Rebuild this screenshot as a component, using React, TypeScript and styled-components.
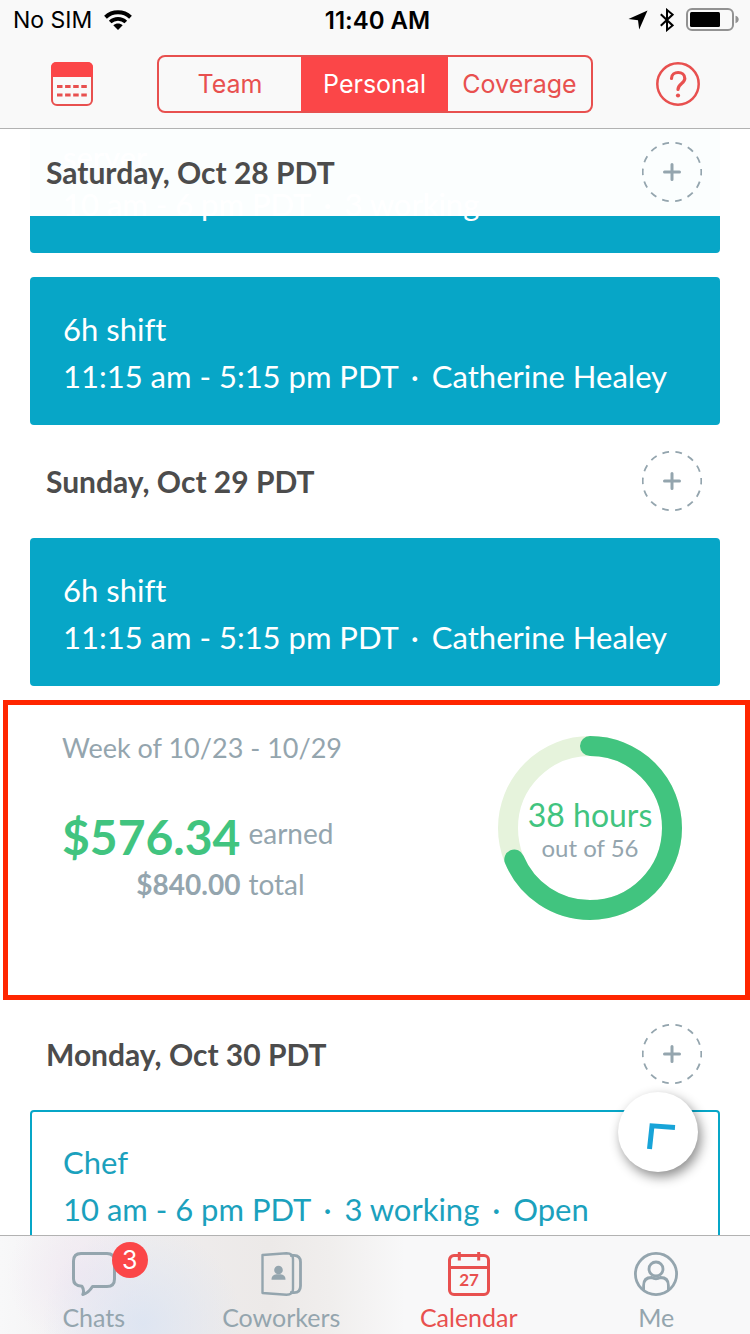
import React from "react";
import styled, { createGlobalStyle, css } from "styled-components";

const red = "#fb4648";
const redLine = "#e8504f";
const teal = "#07a6c7";
const grey = "#94a5ae";
const green = "#41c47f";

const GlobalStyle = createGlobalStyle`
  *, *::before, *::after { box-sizing: border-box; }
  body { margin: 0; background: #fff; }
  button { font: inherit; border: 0; padding: 0; margin: 0; background: none; cursor: pointer; }
  h2, p { margin: 0; }
  svg { display: block; }
`;

const Screen = styled.div`
  display: flex;
  flex-direction: column;
  height: 100vh;
  background: #fff;
  font-family: Lato, "Liberation Sans", sans-serif;
  font-variant-ligatures: none;
`;

const TopBar = styled.header`
  flex: none;
  background: #f9f9f9;
  border-bottom: 1px solid #b2b2b2;
  font-family: Inter, Roboto, sans-serif;
`;

const StatusBar = styled.div`
  display: grid;
  grid-template-columns: 1fr auto 1fr;
  align-items: center;
  height: 40px;
  padding: 0 8px 0 13px;
  font-size: 23px;
  color: #000;
`;

const StatusGroup = styled.div<{ $end?: boolean }>`
  display: flex;
  align-items: center;
  gap: 12px;
  justify-content: ${(p) => (p.$end ? "flex-end" : "flex-start")};
`;

const Clock = styled.span`
  font-size: 24px;
  font-weight: 600;
`;

const NavBar = styled.nav`
  display: flex;
  align-items: center;
  justify-content: space-between;
  height: 88px;
  padding: 0 50px;
`;

const Segments = styled.div`
  display: grid;
  grid-template-columns: 142fr 147fr 143fr;
  width: 436px;
  height: 58px;
  border: 2px solid ${redLine};
  border-radius: 8px;
  overflow: hidden;
`;

const Segment = styled.button<{ $active?: boolean }>`
  font-size: 25px;
  color: ${(p) => (p.$active ? "#fff" : redLine)};
  background: ${(p) => (p.$active ? red : "transparent")};
`;

const Main = styled.main`
  position: relative;
  flex: 1;
  min-height: 0;
  overflow: hidden;
`;

const Schedule = styled.div`
  display: flex;
  flex-direction: column;
  margin-top: -24px;
`;

const dayRow = css`
  display: flex;
  align-items: center;
  justify-content: space-between;
  height: 87px;
  padding: 0 18px 2px 16px;
`;

const DayRow = styled.div`
  ${dayRow}
  margin: 13px 30px;
`;

const StickyDay = styled.div`
  ${dayRow}
  position: absolute;
  top: 0;
  left: 30px;
  right: 30px;
  background: rgba(255, 255, 255, 0.985);
`;

const DayTitle = styled.h2`
  font-size: 30px;
  line-height: 36px;
  font-weight: 700;
  color: #4c4c4c;
`;

const AddButton = styled.button`
  width: 60px;
  height: 60px;
`;

const ShiftCard = styled.article<{ $open?: boolean }>`
  flex: none;
  height: 148px;
  margin: 0 30px;
  padding: 27px 31px 0;
  border: 2px solid ${teal};
  border-radius: 4px;
  font-size: 31px;
  line-height: 47px;
  white-space: nowrap;
  color: ${(p) => (p.$open ? "#1ba1bd" : "#fff")};
  background: ${(p) => (p.$open ? "#fff" : teal)};

  & + & {
    margin-top: 24px;
  }
`;

const Dot = styled.span`
  margin: 0 5px;
`;

const Summary = styled.section`
  display: flex;
  justify-content: space-between;
  align-items: flex-start;
  min-height: 300px;
  margin: 14px 0 0 3px;
  padding: 25px 63px 0 54px;
  border: 5px solid #ff2600;
  color: ${grey};
  font-size: 28px;
  line-height: 36px;

  & + ${DayRow} {
    margin: 11px 30px 12px;
  }
`;

const WeekRange = styled.p`
  font-size: 27px;
`;

const Amounts = styled.div`
  display: grid;
  grid-template-columns: auto auto;
  justify-content: start;
  column-gap: 8px;
  margin-top: 42px;
`;

const Earned = styled.strong`
  font-size: 48px;
  line-height: 58px;
  color: ${green};
`;

const EarnedLabel = styled.span`
  align-self: center;
  padding-bottom: 8px;
`;

const Total = styled.strong`
  text-align: right;
`;

const RingBox = styled.div`
  display: grid;
  width: 184px;
  height: 184px;
  margin-top: 6px;
  place-items: center;

  & > * {
    grid-area: 1 / 1;
  }
`;

const RingText = styled.div`
  padding-top: 6px;
  text-align: center;
  font-size: 24px;
  line-height: 32px;
`;

const Hours = styled.p`
  font-size: 32px;
  line-height: 34px;
  color: ${green};
`;

const FloatingButton = styled.button`
  position: absolute;
  right: 52px;
  bottom: 63px;
  width: 80px;
  height: 80px;
  border-radius: 50%;
  background: #fff;
  box-shadow: 3px 5px 12px rgba(0, 0, 0, 0.45);
`;

const TabBar = styled.nav`
  flex: none;
  display: grid;
  grid-template-columns: repeat(4, 1fr);
  height: 99px;
  border-top: 1px solid #b2b2b2;
  background:
    radial-gradient(circle at 19% 90%, rgba(220, 228, 242, 0.9), rgba(220, 228, 242, 0) 100px),
    radial-gradient(circle at 11% 40%, rgba(240, 231, 242, 0.8), rgba(240, 231, 242, 0) 75px),
    linear-gradient(90deg, #f8f8f9 0, #f0eeef 16%, #ece9e8 36%, #f0eeed 44%, #f8f8f9 54%);
`;

const Tab = styled.a<{ $active?: boolean }>`
  display: flex;
  flex-direction: column;
  align-items: center;
  padding-top: 16px;
  font-size: 25px;
  line-height: 30px;
  gap: 6px;
  text-decoration: none;
  color: ${(p) => (p.$active ? redLine : grey)};
`;

const TabIcon = styled.span`
  position: relative;
  width: 44px;
  height: 44px;
`;

const Badge = styled.span`
  position: absolute;
  top: -10px;
  left: 40px;
  width: 36px;
  height: 36px;
  border-radius: 50%;
  background: ${red};
  color: #fff;
  font-family: Inter, Roboto, sans-serif;
  font-size: 25px;
  line-height: 36px;
  text-align: center;
`;

function WifiIcon() {
  return (
    <svg width="28" height="21" viewBox="0 0 28 21" aria-label="Wi-Fi">
      <path d="M1.500 7.200C8.500.6 19.500.6 26.500 7.200" fill="none" stroke="#000" strokeWidth="4" />
      <path d="M6.200 12C10.600 7.800 17.400 7.800 21.800 12" fill="none" stroke="#000" strokeWidth="3.800" />
      <path d="M9.300 15.200C12 12.800 16 12.800 18.700 15.200L14 20Z" />
    </svg>
  );
}

function LocationIcon() {
  return (
    <svg width="20" height="20" viewBox="0 0 20 20" aria-label="Location">
      <path d="M19.500.5L11.200 19.500L10 10.200L.5 9Z" />
    </svg>
  );
}

function BluetoothIcon() {
  return (
    <svg width="14" height="24" viewBox="0 0 14 24" fill="none" stroke="#000" strokeWidth="2" aria-label="Bluetooth">
      <path d="M.8 6.200L12.600 17.400L7 22V2L12.600 6.600L.8 17.800" />
    </svg>
  );
}

function BatteryIcon() {
  return (
    <svg width="56" height="24" viewBox="0 0 56 24" aria-label="Battery">
      <rect x="1" y="1" width="46" height="21" rx="5" fill="none" stroke="#929292" strokeWidth="2" />
      <rect x="4" y="4" width="30" height="15" rx="1.500" />
      <path d="M49.500 7.800C53.800 9 53.800 14 49.500 15.200Z" fill="#929292" />
    </svg>
  );
}

function MonthIcon() {
  return (
    <svg width="44" height="46" viewBox="0 0 44 46" fill="none">
      <rect x="2" y="2" width="40" height="42" rx="5" stroke={redLine} strokeWidth="2" />
      <path d="M1 16V6.500Q1 1 6.500 1H37.500Q43 1 43 6.500V16Z" fill={red} />
      <path d="M7 25.500H37M7 34H37" stroke={redLine} strokeWidth="2.800" strokeDasharray="5.500 2.600" />
    </svg>
  );
}

function HelpIcon() {
  return (
    <svg width="44" height="44" viewBox="0 0 44 44" fill="none" stroke={redLine}>
      <circle cx="22" cy="22" r="20.700" strokeWidth="2.500" />
      <path d="M15.500 16.500C15.500 8.500 28.800 8.500 28.800 16.500C28.800 21.500 22 21.500 22 27.500" strokeWidth="3.200" strokeLinecap="round" />
      <circle cx="22" cy="33.500" r="2.100" fill={redLine} stroke="none" />
    </svg>
  );
}

function PlusCircle() {
  return (
    <svg width="60" height="60" viewBox="0 0 60 60" fill="none" stroke={grey}>
      <circle cx="30" cy="30" r="29.300" strokeWidth="1.800" strokeDasharray="6.700 6.450" strokeDashoffset="3.350" />
      <path d="M30 22.500V37.500M22.500 30H37.500" strokeWidth="3" strokeLinecap="round" />
    </svg>
  );
}

function ChatIcon() {
  return (
    <svg width="44" height="44" viewBox="0 0 44 44" fill="none" stroke={grey} strokeWidth="3" strokeLinejoin="round">
      <path d="M9 1.500H35Q42.500 1.500 42.500 9V27Q42.500 34.500 35 34.500H20.500C18 38.500 15 41.500 10.800 42.500C12.200 39 11.500 36.500 10 34.300Q1.500 34 1.500 27V9Q1.500 1.500 9 1.500Z" />
    </svg>
  );
}

function CoworkersIcon() {
  return (
    <svg width="44" height="44" viewBox="0 0 44 44" fill="none" stroke={grey} strokeWidth="2.400" strokeLinejoin="round">
      <path d="M3.500 3L27.500 1.300Q34 1.300 34 7V37Q34 42.800 27.500 42.800L3.500 41Z" />
      <path d="M31 3.300H35Q41.500 3.500 41.500 10V34Q41.500 40.500 35 40.700H31" strokeWidth="2.800" />
      <circle cx="19.500" cy="18" r="4.300" fill={grey} stroke="none" />
      <path d="M12.500 27.800C12.500 24 14.500 22.800 17.500 22.300H21.500C24.500 22.800 26.500 24 26.500 27.800Z" fill={grey} stroke="none" />
    </svg>
  );
}

const DateText = styled.text`
  font: 700 17px Lato, sans-serif;
  fill: ${redLine};
  stroke: none;
`;

function CalendarIcon() {
  return (
    <svg width="44" height="44" viewBox="0 0 44 44" fill="none" stroke={redLine} strokeWidth="3">
      <rect x="2.500" y="3.500" width="39" height="39" rx="4.500" />
      <path d="M2 15.500H42M12.300 0V8.500M31.700 0V8.500" />
      <DateText x="22" y="34" textAnchor="middle">27</DateText>
    </svg>
  );
}

function PersonIcon() {
  return (
    <svg width="44" height="44" viewBox="0 0 44 44" fill="none" stroke={grey} strokeWidth="2.800">
      <circle cx="22" cy="22" r="20.600" />
      <circle cx="22" cy="17" r="7" />
      <path d="M9.600 38V33.500Q9.600 25.500 17.500 25.500Q22 28 26.500 25.500Q34.400 25.500 34.400 33.500V38" />
    </svg>
  );
}

function Ring({ ratio }: { ratio: number }) {
  const length = 2 * Math.PI * 82;
  return (
    <svg width="184" height="184" viewBox="0 0 184 184" fill="none" strokeWidth="20">
      <circle cx="92" cy="92" r="82" stroke="#e6f3dc" />
      <circle
        cx="92"
        cy="92"
        r="82"
        stroke={green}
        strokeLinecap="round"
        strokeDasharray={`${length * ratio} ${length}`}
        transform="rotate(-90 92 92)"
      />
    </svg>
  );
}

function AddShift({ day }: { day: string }) {
  return (
    <AddButton aria-label={`Add to ${day}`}>
      <PlusCircle />
    </AddButton>
  );
}

function Shift({ title, parts, open }: { title: string; parts: string[]; open?: boolean }) {
  return (
    <ShiftCard $open={open}>
      <p>{title}</p>
      <p>
        {parts.map((part, i) => (
          <React.Fragment key={part}>
            {i > 0 && <> <Dot>·</Dot> </>}
            {part}
          </React.Fragment>
        ))}
      </p>
    </ShiftCard>
  );
}

export default function App() {
  return (
    <Screen>
      <GlobalStyle />
      <TopBar>
        <StatusBar>
          <StatusGroup>
            <span>No SIM</span>
            <WifiIcon />
          </StatusGroup>
          <Clock>11:40 AM</Clock>
          <StatusGroup $end>
            <LocationIcon />
            <BluetoothIcon />
            <BatteryIcon />
          </StatusGroup>
        </StatusBar>
        <NavBar>
          <button aria-label="Month view">
            <MonthIcon />
          </button>
          <Segments>
            <Segment>Team</Segment>
            <Segment $active>Personal</Segment>
            <Segment>Coverage</Segment>
          </Segments>
          <button aria-label="Help">
            <HelpIcon />
          </button>
        </NavBar>
      </TopBar>

      <Main>
        <Schedule>
          <Shift title="server" parts={["10 am - 6 pm PDT", "3 working"]} />
          <Shift title="6h shift" parts={["11:15 am - 5:15 pm PDT", "Catherine Healey"]} />
          <DayRow>
            <DayTitle>Sunday, Oct 29 PDT</DayTitle>
            <AddShift day="Sunday" />
          </DayRow>
          <Shift title="6h shift" parts={["11:15 am - 5:15 pm PDT", "Catherine Healey"]} />
          <Summary>
            <div>
              <WeekRange>Week of 10/23 - 10/29</WeekRange>
              <Amounts>
                <Earned>$576.34</Earned>
                <EarnedLabel>earned</EarnedLabel>
                <Total>$840.00</Total>
                <span>total</span>
              </Amounts>
            </div>
            <RingBox>
              <Ring ratio={576.34 / 840} />
              <RingText>
                <Hours>38 hours</Hours>
                <p>out of 56</p>
              </RingText>
            </RingBox>
          </Summary>
          <DayRow>
            <DayTitle>Monday, Oct 30 PDT</DayTitle>
            <AddShift day="Monday" />
          </DayRow>
          <Shift title="Chef" parts={["10 am - 6 pm PDT", "3 working", "Open"]} open />
        </Schedule>
        <StickyDay>
          <DayTitle>Saturday, Oct 28 PDT</DayTitle>
          <AddShift day="Saturday" />
        </StickyDay>
        <FloatingButton aria-label="Jump to today">
          <svg width="80" height="80" viewBox="0 0 80 80" fill="none" stroke="#18a4d8" strokeWidth="5">
            <path d="M31.500 57L34 33.800L57 35.500" />
          </svg>
        </FloatingButton>
      </Main>

      <TabBar>
        <Tab href="#chats">
          <TabIcon>
            <ChatIcon />
            <Badge>3</Badge>
          </TabIcon>
          Chats
        </Tab>
        <Tab href="#coworkers">
          <TabIcon>
            <CoworkersIcon />
          </TabIcon>
          Coworkers
        </Tab>
        <Tab href="#calendar" $active>
          <TabIcon>
            <CalendarIcon />
          </TabIcon>
          Calendar
        </Tab>
        <Tab href="#me">
          <TabIcon>
            <PersonIcon />
          </TabIcon>
          Me
        </Tab>
      </TabBar>
    </Screen>
  );
}
